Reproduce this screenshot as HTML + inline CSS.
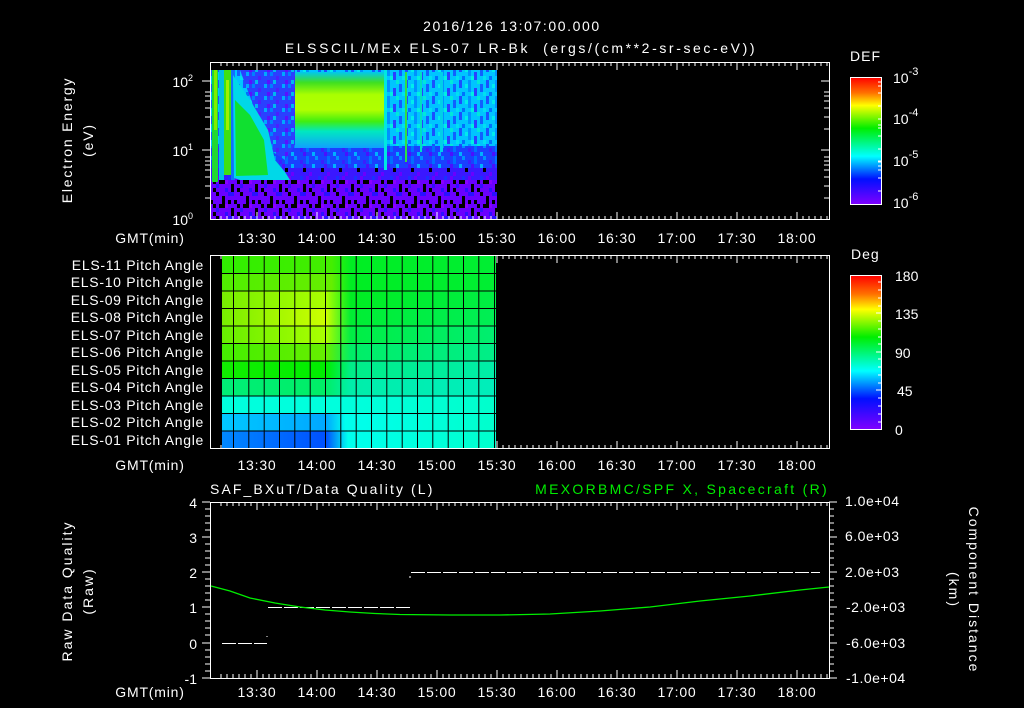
<!DOCTYPE html>
<html><head><meta charset="utf-8"><style>
html,body{margin:0;padding:0;background:#000;width:1024px;height:708px;overflow:hidden}
svg{display:block}
text{font-family:"Liberation Sans",sans-serif;fill:#fff;font-size:14px}
</style></head><body>
<svg width="1024" height="708" xmlns="http://www.w3.org/2000/svg">
<defs>
<pattern id="mix" width="27" height="16" patternUnits="userSpaceOnUse">
<rect width="27" height="16" fill="#00c4ff"/>
<rect x="0" y="0" width="3" height="8" fill="#1a50ff"/><rect x="6" y="4" width="3" height="4" fill="#00ecec"/>
<rect x="9" y="0" width="3" height="12" fill="#0090ff"/><rect x="15" y="8" width="3" height="8" fill="#2a40ff"/>
<rect x="18" y="0" width="3" height="4" fill="#00e8d8"/><rect x="21" y="4" width="3" height="8" fill="#1060ff"/>
<rect x="3" y="12" width="3" height="4" fill="#0070ff"/><rect x="24" y="12" width="3" height="4" fill="#00e0f0"/>
<rect x="12" y="12" width="3" height="4" fill="#00f0e0"/>
</pattern>
<pattern id="mixb" width="21" height="12" patternUnits="userSpaceOnUse">
<rect width="21" height="12" fill="#1a40ff"/>
<rect x="0" y="0" width="3" height="4" fill="#0090ff"/><rect x="6" y="4" width="3" height="4" fill="#3a20ff"/>
<rect x="12" y="0" width="3" height="8" fill="#0070ff"/><rect x="18" y="8" width="3" height="4" fill="#00b0ff"/>
<rect x="9" y="8" width="3" height="4" fill="#4a10ff"/>
</pattern>
<pattern id="mixd" width="18" height="12" patternUnits="userSpaceOnUse">
<rect width="18" height="12" fill="#2a40ff"/>
<rect x="0" y="0" width="3" height="4" fill="#0080ff"/><rect x="6" y="4" width="3" height="4" fill="#4a20ff"/>
<rect x="12" y="0" width="3" height="4" fill="#00a8ff"/><rect x="15" y="8" width="3" height="4" fill="#5a10ff"/>
<rect x="3" y="8" width="3" height="4" fill="#00b8f0"/>
</pattern>
<pattern id="noise" width="24" height="24" patternUnits="userSpaceOnUse">
<rect width="24" height="24" fill="#6a00ff"/>
<rect x="0" y="0" width="3" height="4" fill="#000"/><rect x="6" y="4" width="3" height="8" fill="#000"/>
<rect x="12" y="0" width="6" height="4" fill="#2a10ff"/><rect x="18" y="8" width="3" height="4" fill="#000"/>
<rect x="3" y="12" width="6" height="4" fill="#000"/><rect x="15" y="16" width="3" height="8" fill="#000"/>
<rect x="21" y="20" width="3" height="4" fill="#000"/><rect x="9" y="20" width="3" height="4" fill="#2a10ff"/>
<rect x="0" y="16" width="3" height="4" fill="#3010ff"/><rect x="12" y="8" width="3" height="4" fill="#000"/>
<rect x="21" y="12" width="3" height="4" fill="#000"/><rect x="9" y="12" width="3" height="4" fill="#8a00ff"/>
</pattern>
<pattern id="noise2" width="18" height="16" patternUnits="userSpaceOnUse">
<rect width="18" height="16" fill="#3a18ff"/>
<rect x="0" y="0" width="3" height="4" fill="#6a00ff"/><rect x="9" y="4" width="3" height="4" fill="#6a00ff"/>
<rect x="15" y="8" width="3" height="4" fill="#000"/><rect x="3" y="12" width="3" height="4" fill="#6a00ff"/>
<rect x="12" y="0" width="3" height="4" fill="#1a30ff"/>
</pattern>
<linearGradient id="cb" x1="0" y1="0" x2="0" y2="1">
<stop offset="0" stop-color="#ff0000"/><stop offset="0.12" stop-color="#ff7000"/><stop offset="0.22" stop-color="#ffff00"/>
<stop offset="0.4" stop-color="#00ee00"/><stop offset="0.62" stop-color="#00ffff"/><stop offset="0.8" stop-color="#0010ff"/>
<stop offset="1" stop-color="#8000ff"/></linearGradient>
<linearGradient id="band" x1="0" y1="0" x2="0" y2="1">
<stop offset="0" stop-color="#00c8f0"/><stop offset="0.14" stop-color="#40e020"/><stop offset="0.3" stop-color="#aaff00"/>
<stop offset="0.5" stop-color="#b0ff00"/><stop offset="0.65" stop-color="#40ee10"/><stop offset="0.78" stop-color="#00e8c0"/><stop offset="1" stop-color="#10a0ff"/></linearGradient>
<linearGradient id="r1" x1="0" x2="1"><stop offset="0" stop-color="#30ee00"/><stop offset="0.4" stop-color="#44ee00"/><stop offset="0.47" stop-color="#00ee22"/><stop offset="1" stop-color="#00ee33"/></linearGradient>
<linearGradient id="r2" x1="0" x2="1"><stop offset="0" stop-color="#50ee00"/><stop offset="0.4" stop-color="#66ee00"/><stop offset="0.47" stop-color="#00ee22"/><stop offset="1" stop-color="#00ee33"/></linearGradient>
<linearGradient id="r3" x1="0" x2="1"><stop offset="0" stop-color="#77ee00"/><stop offset="0.38" stop-color="#aaff00"/><stop offset="0.47" stop-color="#00ee22"/><stop offset="1" stop-color="#00ee44"/></linearGradient>
<linearGradient id="r4" x1="0" x2="1"><stop offset="0" stop-color="#77ee00"/><stop offset="0.38" stop-color="#ccff00"/><stop offset="0.47" stop-color="#00ee33"/><stop offset="1" stop-color="#00ee55"/></linearGradient>
<linearGradient id="r5" x1="0" x2="1"><stop offset="0" stop-color="#66ee00"/><stop offset="0.38" stop-color="#aaff00"/><stop offset="0.47" stop-color="#00ee44"/><stop offset="1" stop-color="#00ee70"/></linearGradient>
<linearGradient id="r6" x1="0" x2="1"><stop offset="0" stop-color="#44ee00"/><stop offset="0.38" stop-color="#66ee00"/><stop offset="0.47" stop-color="#00ee66"/><stop offset="1" stop-color="#00ee88"/></linearGradient>
<linearGradient id="r7" x1="0" x2="1"><stop offset="0" stop-color="#11ee00"/><stop offset="0.38" stop-color="#00ee00"/><stop offset="0.47" stop-color="#00ee88"/><stop offset="1" stop-color="#00eea8"/></linearGradient>
<linearGradient id="r8" x1="0" x2="1"><stop offset="0" stop-color="#00ee77"/><stop offset="0.38" stop-color="#00ee66"/><stop offset="0.47" stop-color="#00eeaa"/><stop offset="1" stop-color="#00eebb"/></linearGradient>
<linearGradient id="r9" x1="0" x2="1"><stop offset="0" stop-color="#00ffdd"/><stop offset="0.47" stop-color="#00ffdd"/><stop offset="1" stop-color="#00ffcc"/></linearGradient>
<linearGradient id="r10" x1="0" x2="1"><stop offset="0" stop-color="#00c8ff"/><stop offset="0.38" stop-color="#00a8ff"/><stop offset="0.45" stop-color="#00ffee"/><stop offset="1" stop-color="#00ffcc"/></linearGradient>
<linearGradient id="r11" x1="0" x2="1"><stop offset="0" stop-color="#0088ff"/><stop offset="0.38" stop-color="#0050ff"/><stop offset="0.46" stop-color="#00ffee"/><stop offset="1" stop-color="#00ffcc"/></linearGradient>
</defs>

<!-- titles -->
<text x="512" y="31" text-anchor="middle" font-size="17" letter-spacing="1.6">2016/126 13:07:00.000</text>
<text x="521" y="53" text-anchor="middle" font-size="17" letter-spacing="2.6" xml:space="preserve">ELSSCIL/MEx ELS-07 LR-Bk  (ergs/(cm**2-sr-sec-eV))</text>

<!-- TOP PANEL spectrogram -->
<rect x="211" y="70" width="286" height="150" fill="#2030ff"/>
<rect x="211" y="70" width="286" height="80" fill="url(#mix)"/>
<rect x="211" y="146" width="286" height="30" fill="url(#mixb)"/>
<rect x="211" y="168" width="286" height="14" fill="url(#noise2)"/>
<rect x="211" y="180" width="286" height="39" fill="url(#noise)"/>
<!-- dark region left-mid -->
<polygon points="240,70 295,70 295,145 285,160 270,150 255,110" fill="url(#mixd)"/>
<!-- left stripes -->
<rect x="212" y="70" width="6" height="112" fill="#20d830"/>
<rect x="214" y="70" width="3" height="60" fill="#80ee00"/>
<rect x="219" y="70" width="5" height="110" fill="#00c0e0"/>
<rect x="224" y="70" width="7" height="105" fill="#40e010"/>
<rect x="226" y="80" width="3" height="50" fill="#a0f000"/>
<rect x="231" y="70" width="4" height="110" fill="#1070ff"/>
<!-- blob -->
<polygon points="233,75 250,100 268,130 275,160 285,172 290,180 240,180 234,178" fill="#00d8e8"/>
<polygon points="235,100 250,115 264,140 268,175 236,176" fill="#10e030"/>
<!-- bright band -->
<rect x="295" y="72" width="90" height="76" fill="url(#band)"/>
<!-- right vertical stripes -->
<rect x="405" y="72" width="2" height="90" fill="#30e040"/>
<rect x="420" y="72" width="2" height="80" fill="#00e0c0"/>
<rect x="440" y="72" width="3" height="80" fill="#00d0e8"/>
<rect x="384" y="70" width="3" height="100" fill="#00e8e0"/>

<!-- top frame -->
<rect x="210.5" y="62.5" width="619" height="157" fill="none" stroke="#fff"/>
<g stroke="#fff">
<path id="xt" d="M221 62v4M227 62v4M233 62v4M239 62v4M245 62v4M251 62v4M257 62v8M263 62v4M269 62v4M275 62v4M281 62v4M287 62v4M293 62v4M299 62v4M305 62v4M311 62v4M317 62v8M323 62v4M329 62v4M335 62v4M341 62v4M347 62v4M353 62v4M359 62v4M365 62v4M371 62v4M377 62v8M383 62v4M389 62v4M395 62v4M401 62v4M407 62v4M413 62v4M419 62v4M425 62v4M431 62v4M437 62v8M443 62v4M449 62v4M455 62v4M461 62v4M467 62v4M473 62v4M479 62v4M485 62v4M491 62v4M497 62v8M503 62v4M509 62v4M515 62v4M521 62v4M527 62v4M533 62v4M539 62v4M545 62v4M551 62v4M557 62v8M563 62v4M569 62v4M575 62v4M581 62v4M587 62v4M593 62v4M599 62v4M605 62v4M611 62v4M617 62v8M623 62v4M629 62v4M635 62v4M641 62v4M647 62v4M653 62v4M659 62v4M665 62v4M671 62v4M677 62v8M683 62v4M689 62v4M695 62v4M701 62v4M707 62v4M713 62v4M719 62v4M725 62v4M731 62v4M737 62v8M743 62v4M749 62v4M755 62v4M761 62v4M767 62v4M773 62v4M779 62v4M785 62v4M791 62v4M797 62v8M803 62v4M809 62v4M815 62v4M821 62v4M827 62v4"/>
<use href="#xt" transform="translate(0,282) scale(1,-1)"/>
<use href="#xt" transform="translate(0,193)"/>
<use href="#xt" transform="translate(0,511) scale(1,-1)"/>
<use href="#xt" transform="translate(0,440)"/>
<use href="#xt" transform="translate(0,740) scale(1,-1)"/>
<path d="M202 81h8M202 150h8M205 129h5M205 117h5M205 108h5M205 101h5M205 96h5M205 92h5M205 198h5M205 186h5M205 177h5M205 170h5M205 165h5M205 161h5M205 157h5"/>
<path d="M829 81h-8M829 150h-8M829 129h-5M829 117h-5M829 108h-5M829 101h-5M829 96h-5M829 92h-5M829 198h-5M829 186h-5M829 177h-5M829 170h-5M829 165h-5M829 161h-5M829 157h-5"/>
</g>
<text x="193" y="87" text-anchor="end" font-size="14">10<tspan dy="-6" font-size="9">2</tspan></text>
<text x="193" y="156" text-anchor="end" font-size="14">10<tspan dy="-6" font-size="9">1</tspan></text>
<text x="193" y="225" text-anchor="end" font-size="14">10<tspan dy="-6" font-size="9">0</tspan></text>
<text transform="translate(72,140) rotate(-90)" text-anchor="middle" font-size="16" letter-spacing="1.8">Electron Energy</text>
<text transform="translate(93,140) rotate(-90)" text-anchor="middle" font-size="16" letter-spacing="1.8">(eV)</text>

<!-- time labels -->
<g font-size="15" text-anchor="middle" letter-spacing="0.8">
<text x="150" y="243">GMT(min)</text>
<text x="257" y="243">13:30</text><text x="317" y="243">14:00</text><text x="377" y="243">14:30</text><text x="437" y="243">15:00</text><text x="497" y="243">15:30</text><text x="557" y="243">16:00</text><text x="617" y="243">16:30</text><text x="677" y="243">17:00</text><text x="737" y="243">17:30</text><text x="797" y="243">18:00</text>
<text x="150" y="470">GMT(min)</text>
<text x="257" y="470">13:30</text><text x="317" y="470">14:00</text><text x="377" y="470">14:30</text><text x="437" y="470">15:00</text><text x="497" y="470">15:30</text><text x="557" y="470">16:00</text><text x="617" y="470">16:30</text><text x="677" y="470">17:00</text><text x="737" y="470">17:30</text><text x="797" y="470">18:00</text>
<text x="150" y="697">GMT(min)</text>
<text x="257" y="697">13:30</text><text x="317" y="697">14:00</text><text x="377" y="697">14:30</text><text x="437" y="697">15:00</text><text x="497" y="697">15:30</text><text x="557" y="697">16:00</text><text x="617" y="697">16:30</text><text x="677" y="697">17:00</text><text x="737" y="697">17:30</text><text x="797" y="697">18:00</text>
</g>

<!-- colorbar top -->
<text x="850" y="61" font-size="17" letter-spacing="1">DEF</text>
<rect x="850.5" y="77.5" width="31" height="127" fill="url(#cb)" stroke="#fff"/>
<g stroke="#fff"><path d="M882 82h-4M882 86h-4M882 93h-4M882 106h-4M882 119h-4M882 125h-4M882 128h-4M882 136h-4M882 149h-4M882 161h-4M882 162h-4M882 166h-4M882 170h-4M882 178h-4M882 191h-4"/></g>
<g font-size="17"><text x="893" y="83">10<tspan dy="-8" font-size="11">-3</tspan></text>
<text x="893" y="124">10<tspan dy="-8" font-size="11">-4</tspan></text>
<text x="893" y="166">10<tspan dy="-8" font-size="11">-5</tspan></text>
<text x="893" y="208">10<tspan dy="-8" font-size="11">-6</tspan></text></g>

<!-- MIDDLE PANEL -->
<g>
<rect x="222" y="256" width="274" height="17.6" fill="url(#r1)"/>
<rect x="222" y="273.5" width="274" height="17.6" fill="url(#r2)"/>
<rect x="222" y="291" width="274" height="17.6" fill="url(#r3)"/>
<rect x="222" y="308.5" width="274" height="17.6" fill="url(#r4)"/>
<rect x="222" y="326" width="274" height="17.6" fill="url(#r5)"/>
<rect x="222" y="343.5" width="274" height="17.6" fill="url(#r6)"/>
<rect x="222" y="361" width="274" height="17.6" fill="url(#r7)"/>
<rect x="222" y="378.5" width="274" height="17.6" fill="url(#r8)"/>
<rect x="222" y="396" width="274" height="17.6" fill="url(#r9)"/>
<rect x="222" y="413.5" width="274" height="17.6" fill="url(#r10)"/>
<rect x="222" y="431" width="274" height="18" fill="url(#r11)"/>
</g>
<g stroke="#000" stroke-width="1">
<path d="M222 273.5h274M222 291h274M222 308.5h274M222 326h274M222 343.5h274M222 361h274M222 378.5h274M222 396h274M222 413.5h274M222 431h274"/>
<path d="M233.5 256v193M248.8 256v193M264.2 256v193M279.5 256v193M294.8 256v193M310.2 256v193M325.5 256v193M340.8 256v193M356.2 256v193M371.5 256v193M386.8 256v193M402.2 256v193M417.5 256v193M432.8 256v193M448.2 256v193M463.5 256v193M478.8 256v193M494.5 256v193"/>
</g>
<rect x="210.5" y="255.5" width="619" height="193" fill="none" stroke="#fff"/>
<g font-size="13" text-anchor="end" letter-spacing="0.7">
<text x="204" y="270">ELS-11 Pitch Angle</text><text x="204" y="287">ELS-10 Pitch Angle</text><text x="204" y="305">ELS-09 Pitch Angle</text><text x="204" y="322">ELS-08 Pitch Angle</text><text x="204" y="340">ELS-07 Pitch Angle</text><text x="204" y="357">ELS-06 Pitch Angle</text><text x="204" y="375">ELS-05 Pitch Angle</text><text x="204" y="392">ELS-04 Pitch Angle</text><text x="204" y="410">ELS-03 Pitch Angle</text><text x="204" y="427">ELS-02 Pitch Angle</text><text x="204" y="445">ELS-01 Pitch Angle</text>
</g>
<text x="851" y="259" font-size="17" letter-spacing="1">Deg</text>
<rect x="850.5" y="275.5" width="31" height="154" fill="url(#cb)" stroke="#fff"/>
<g stroke="#fff"><path d="M882 282h-4M882 290h-4M882 298h-4M882 306h-4M882 321h-4M882 329h-4M882 337h-4M882 344h-4M882 359h-4M882 367h-4M882 375h-4M882 383h-4M882 398h-4M882 406h-4M882 414h-4M882 422h-4M882 313h-6M882 352h-6M882 390h-6"/></g>
<g font-size="17"><text x="895" y="281">180</text><text x="895" y="319">135</text><text x="895" y="358">90</text><text x="897" y="396">45</text><text x="895" y="435">0</text></g>

<!-- BOTTOM PANEL -->
<text x="210" y="494" font-size="16" letter-spacing="2.1">SAF_BXuT/Data Quality (L)</text>
<text x="829" y="494" font-size="16" text-anchor="end" letter-spacing="2.3" style="fill:#00ee00">MEXORBMC/SPF X, Spacecraft (R)</text>
<rect x="210.5" y="502.5" width="619" height="176" fill="none" stroke="#fff"/>
<g stroke="#fff">
<path d="M202 502h8M202 537h8M202 572h8M202 607h8M202 643h8M202 678h8M205 509h5M205 516h5M205 523h5M205 530h5M205 544h5M205 551h5M205 558h5M205 565h5M205 579h5M205 586h5M205 593h5M205 600h5M205 614h5M205 621h5M205 628h5M205 635h5M205 650h5M205 657h5M205 664h5M205 671h5"/>
<path d="M829 502h8M829 537h8M829 572h8M829 607h8M829 643h8M829 678h8M829 509h5M829 516h5M829 523h5M829 530h5M829 544h5M829 551h5M829 558h5M829 565h5M829 579h5M829 586h5M829 593h5M829 600h5M829 614h5M829 621h5M829 628h5M829 635h5M829 650h5M829 657h5M829 664h5M829 671h5"/>
<path d="M222 643.5h45" stroke-dasharray="14,2"/>
<path d="M268 607.5h142" stroke-dasharray="14,2"/>
<path d="M411 572.5h409" stroke-dasharray="14,2"/>
<path d="M410 576v2M267 636v1"/>
</g>
<polyline points="211,586 230,591 250,598 275,603 300,607 325,610 350,612 375,613.5 400,614.5 450,615 500,615 550,614 600,611 650,607 700,601 750,596 800,590 829,587" fill="none" stroke="#00ee00" stroke-width="1.3"/>
<g font-size="16" text-anchor="end"><text x="197" y="508">4</text><text x="197" y="543">3</text><text x="197" y="578">2</text><text x="197" y="613">1</text><text x="197" y="649">0</text><text x="197" y="684">-1</text></g>
<g font-size="13" letter-spacing="0.5"><text x="845" y="506">1.0e+04</text><text x="845" y="541">6.0e+03</text><text x="845" y="577">2.0e+03</text><text x="846" y="612">-2.0e+03</text><text x="846" y="648">-6.0e+03</text><text x="846" y="683">-1.0e+04</text></g>
<text transform="translate(72,591) rotate(-90)" text-anchor="middle" font-size="16" letter-spacing="2">Raw Data Quality</text>
<text transform="translate(93,591) rotate(-90)" text-anchor="middle" font-size="16" letter-spacing="2">(Raw)</text>
<text transform="translate(969,590) rotate(90)" text-anchor="middle" font-size="16" letter-spacing="2">Component Distance</text>
<text transform="translate(949,590) rotate(90)" text-anchor="middle" font-size="16" letter-spacing="2">(km)</text>
</svg>
</body></html>
